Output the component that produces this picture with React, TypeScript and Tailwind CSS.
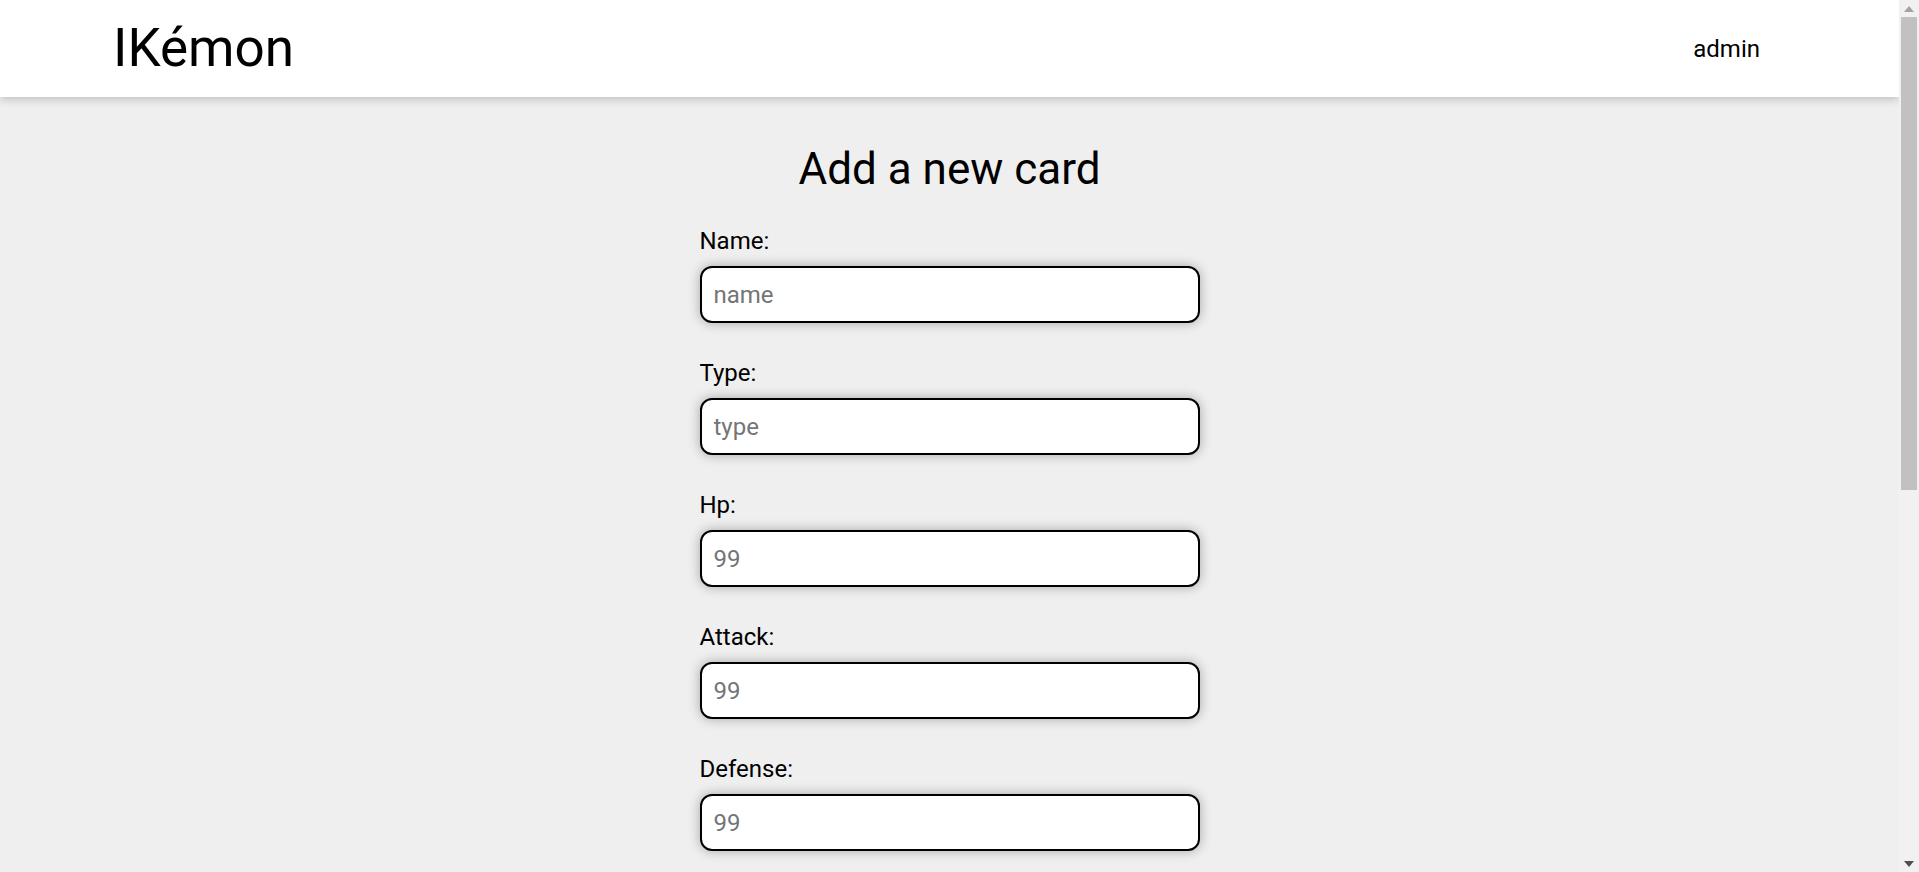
import { useState } from 'react'

interface Field {
  key: string
  label: string
  placeholder: string
  type: 'text' | 'number'
}

const FIELDS: Field[] = [
  { key: 'name', label: 'Name:', placeholder: 'name', type: 'text' },
  { key: 'type', label: 'Type:', placeholder: 'type', type: 'text' },
  { key: 'hp', label: 'Hp:', placeholder: '99', type: 'number' },
  { key: 'attack', label: 'Attack:', placeholder: '99', type: 'number' },
  { key: 'defense', label: 'Defense:', placeholder: '99', type: 'number' },
  { key: 'price', label: 'Price:', placeholder: '99', type: 'number' },
  { key: 'description', label: 'Description:', placeholder: 'description', type: 'text' },
  { key: 'image', label: 'Image:', placeholder: 'image url', type: 'text' },
]

function Header() {
  return (
    <header className="relative z-10 flex h-[97px] items-center justify-between bg-white pl-[113px] pr-[139px] shadow-[0_2px_9px_rgba(0,0,0,0.22)]">
      <span className="text-[53px] leading-none">IKémon</span>
      <a href="#" className="text-[24px] leading-none">admin</a>
    </header>
  )
}

// the page's scrollbar, as the reference shows it
function ScrollTrack() {
  return (
    <div className="flex w-[20px] shrink-0 flex-col bg-[#f1f1f1]">
      <div className="flex h-[17px] items-center justify-center">
        <svg width="10" height="6" viewBox="0 0 10 6"><polygon points="5,0 10,6 0,6" fill="#a3a3a3" /></svg>
      </div>
      <div className="mx-[2px] h-[473px] bg-[#c1c1c1]" />
      <div className="flex-1" />
      <div className="flex h-[17px] items-center justify-center">
        <svg width="10" height="6" viewBox="0 0 10 6"><polygon points="0,0 10,0 5,6" fill="#505050" /></svg>
      </div>
    </div>
  )
}

export default function App() {
  const [values, setValues] = useState<Record<string, string>>({})

  return (
    <div className="flex h-screen bg-[#efefef] font-['Roboto',sans-serif] text-black">
      <div className="min-w-0 flex-1 overflow-y-auto">
        <Header />
        <main className="flex flex-col items-center pb-[80px]">
          <h1 className="mt-[46px] text-[44px] leading-[52px]">Add a new card</h1>
          <form className="mt-[32px] flex w-[500px] flex-col gap-[36px]" onSubmit={e => e.preventDefault()}>
            {FIELDS.map(field => (
              <label key={field.key} className="flex flex-col">
                <span className="text-[24px] leading-[28px]">{field.label}</span>
                <input
                  type={field.type}
                  placeholder={field.placeholder}
                  value={values[field.key] ?? ''}
                  onChange={e => setValues({ ...values, [field.key]: e.target.value })}
                  className="mt-[11px] h-[57px] rounded-[12px] border-2 border-black bg-white px-3 text-[24px] shadow-[0_0_12px_rgba(0,0,0,0.3)] outline-none placeholder:text-[#757575]"
                />
              </label>
            ))}
            <button
              type="submit"
              className="mt-2 h-[57px] rounded-[12px] border-2 border-black bg-white text-[24px] shadow-[0_0_12px_rgba(0,0,0,0.3)]"
            >
              Add card
            </button>
          </form>
        </main>
      </div>
      <ScrollTrack />
    </div>
  )
}
